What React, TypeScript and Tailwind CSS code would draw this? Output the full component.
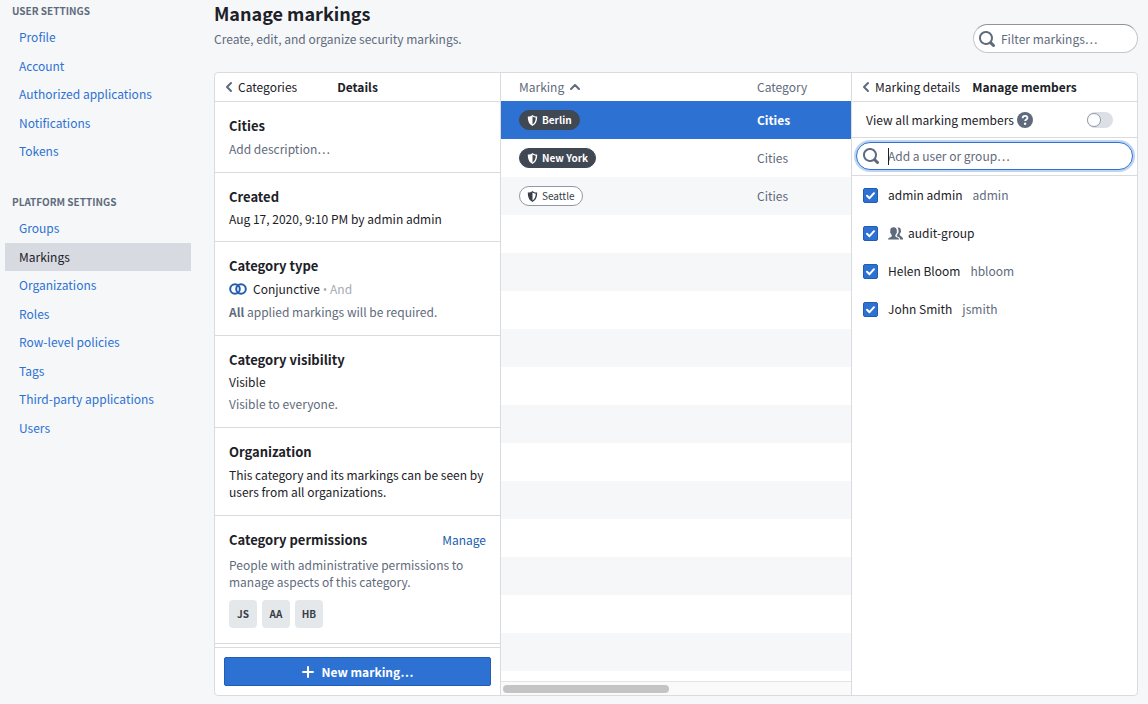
import { useState } from 'react';
import type { ReactNode } from 'react';

const userSettings = ['Profile', 'Account', 'Authorized applications', 'Notifications', 'Tokens'];

const platformSettings = [
  'Groups',
  'Markings',
  'Organizations',
  'Roles',
  'Row-level policies',
  'Tags',
  'Third-party applications',
  'Users',
];

const markings = [
  { name: 'Berlin', category: 'Cities', dark: true },
  { name: 'New York', category: 'Cities', dark: true },
  { name: 'Seattle', category: 'Cities', dark: false },
];

const members = [
  { name: 'admin admin', username: 'admin' },
  { name: 'audit-group', group: true },
  { name: 'Helen Bloom', username: 'hbloom' },
  { name: 'John Smith', username: 'jsmith' },
];

const FILLER_ROWS = 13;

function SearchIcon({ className }: { className?: string }) {
  return (
    <svg viewBox="0 0 16 16" className={`size-4 fill-[#5f6b7c] ${className ?? ''}`} aria-hidden="true">
      <path d="M15.55 13.43l-2.67-2.68a6.94 6.94 0 001.11-3.76c0-3.87-3.13-7-7-7s-7 3.13-7 7 3.13 7 7 7c1.39 0 2.68-.42 3.76-1.11l2.68 2.67a1.498 1.498 0 102.12-2.12zm-8.56-1.44c-2.76 0-5-2.24-5-5s2.24-5 5-5 5 2.24 5 5-2.24 5-5 5z" />
    </svg>
  );
}

function ChevronIcon({ className }: { className?: string }) {
  return (
    <svg
      viewBox="0 0 16 16"
      className={`size-4 fill-none stroke-[#5f6b7c] ${className ?? ''}`}
      strokeWidth="2"
      strokeLinecap="round"
      strokeLinejoin="round"
      aria-hidden="true"
    >
      <path d="M10 4L6 8l4 4" />
    </svg>
  );
}

function ShieldIcon() {
  return (
    <svg viewBox="0 0 16 16" className="size-[11px] fill-current" aria-hidden="true">
      <path
        fillRule="evenodd"
        d="M8 0c1.800 1.400 3.900 2.300 6.800 2.300 0 6-1.300 10.800-6.800 13.700C2.500 13.100 1.200 8.300 1.200 2.300 4.100 2.300 6.200 1.400 8 0zm0 2.300v11.400c3.300-2.200 4.500-5.300 4.800-9.700C10.900 3.800 9.400 3.200 8 2.300z"
      />
    </svg>
  );
}

function PeopleIcon() {
  return (
    <svg viewBox="0 0 16 16" className="size-[15px] fill-[#5f6b7c]" aria-hidden="true">
      <path d="M5.900 1.300c2.100 0 3.500 1.300 3.500 3.400 0 .5 0 .8-.1 1.100.4.200.3 1.500-.3 1.800-.3.900-.7 1.500-1.200 1.900v1.100c0 1.400 4.200 1.500 4.200 3.900H0c0-2.400 4-2.500 4-3.900V9.500c-.5-.4-.9-1-1.200-1.900-.6-.3-.7-1.600-.3-1.800-.1-.3-.1-.6-.1-1.100 0-2.100 1.400-3.400 3.500-3.400z" />
      <path d="M10 1.700c.3-.1.700-.2 1.100-.2 1.700 0 2.600 1.100 2.600 2.700v1c.4.200.2 1.300-.2 1.500-.3.800-.6 1.300-1 1.700v1.100c0 1.100 3.500 1.600 3.500 4.200v.8h-3c0-2.600-2.100-3-3.400-3.700-.4-.2-.4-.6-.1-1 .4-.5.800-1 1-1.700.8-.7 1-1.800.7-2.700.1-1.500-.3-2.800-1.200-3.700z" />
    </svg>
  );
}

function Panel({ title, action, children }: { title: string; action?: ReactNode; children: ReactNode }) {
  return (
    <section className="border-b border-[#d9dbde] px-3.5 pt-3 pb-3">
      <div className="flex items-center justify-between">
        <h2 className="text-[13px] leading-[23px] font-bold">{title}</h2>
        {action}
      </div>
      {children}
    </section>
  );
}

function SidebarGroup({ title, items, active }: { title: string; items: string[]; active?: string }) {
  return (
    <div>
      <h2 className="pl-[7px] text-[10px] leading-4 font-bold text-[#5f6b7c]">{title}</h2>
      <ul className="mt-1">
        {items.map((item) => (
          <li key={item} className="even:mt-px">
            <a
              href="#"
              className={`block pl-3.5 leading-7 ${
                item === active ? 'bg-[#d7dae0] text-[#1c2127]' : 'text-[#2d72d2]'
              }`}
            >
              {item}
            </a>
          </li>
        ))}
      </ul>
    </div>
  );
}

function Details() {
  return (
    <div className="flex w-[286px] shrink-0 flex-col border-r border-[#d9dbde]">
      <div className="flex h-[29px] shrink-0 items-center border-b border-[#d9dbde] pl-1.5">
        <button className="flex items-center">
          <ChevronIcon />
          <span className="pl-px">Categories</span>
        </button>
        <button className="ml-10 font-bold">Details</button>
      </div>

      <div className="min-h-0 flex-1 overflow-hidden">
        <Panel title="Cities">
          <p className="leading-[23px] text-[#5f6b7c]">Add description…</p>
        </Panel>
        <Panel title="Created">
          <p className="leading-[21px]">Aug 17, 2020, 9:10 PM by admin admin</p>
        </Panel>
        <Panel title="Category type">
          <p className="flex h-6 items-center">
            <svg viewBox="0 0 18 12" className="mr-1.5 h-3 w-[18px] fill-none stroke-[#215db0]" strokeWidth="2" aria-hidden="true">
              <circle cx="6" cy="6" r="4.800" />
              <circle cx="12" cy="6" r="4.800" />
            </svg>
            Conjunctive
            <span className="pl-[3px] text-[#a5abb5]">
              <span className="font-['Open_Sans',sans-serif] leading-none">•</span> And
            </span>
          </p>
          <p className="leading-[22px] text-[#5f6b7c]">
            <b>All</b> applied markings will be required.
          </p>
        </Panel>
        <Panel title="Category visibility">
          <p className="leading-[22px]">Visible</p>
          <p className="leading-[22px] text-[#5f6b7c]">Visible to everyone.</p>
        </Panel>
        <Panel title="Organization">
          <p className="my-[3px] leading-[17px]">
            This category and its markings can be seen by users from all organizations.
          </p>
        </Panel>
        <Panel title="Category permissions" action={<button className="text-[#215db0]">Manage</button>}>
          <p className="mt-[5px] leading-[17px] text-[#5f6b7c]">
            People with administrative permissions to manage aspects of this category.
          </p>
          <div className="mt-2.5 mb-[3px] flex gap-[5px]">
            {['JS', 'AA', 'HB'].map((initials) => (
              <span
                key={initials}
                className="flex size-7 items-center justify-center rounded-sm bg-[#e5e8eb] text-[10px] font-bold text-[#383e47]"
              >
                {initials}
              </span>
            ))}
          </div>
        </Panel>
      </div>

      <div className="border-t border-[#d9dbde] p-[9px]">
        <button className="flex h-[29px] w-full items-center justify-center gap-2 rounded-xs border border-[#215db0] bg-[#2d72d2] font-bold text-white">
          <svg viewBox="0 0 12 12" className="size-3 stroke-white" strokeWidth="2" strokeLinecap="round" aria-hidden="true">
            <path d="M6 1v10M1 6h10" />
          </svg>
          New marking…
        </button>
      </div>
    </div>
  );
}

function MarkingTable() {
  const [selected, setSelected] = useState('Berlin');

  return (
    <div className="flex min-w-0 flex-1 flex-col">
      <div className="min-h-0 flex-1 overflow-hidden">
        <table className="w-full table-fixed border-collapse text-left">
          <thead>
            <tr className="h-7 text-[#5f6b7c]">
              <th className="w-[238px] p-0 pl-[18px] font-normal">
                <span className="flex items-center gap-[3px]">
                  Marking
                  <ChevronIcon className="rotate-90" />
                </span>
              </th>
              <th className="p-0 pl-[18px] font-normal">Category</th>
            </tr>
          </thead>
          <tbody>
            {markings.map((marking) => (
              <tr
                key={marking.name}
                onClick={() => setSelected(marking.name)}
                className={`h-[38px] ${
                  marking.name === selected
                    ? 'bg-[#2d72d2] font-bold text-white'
                    : 'text-[#5f6b7c] odd:bg-[#f6f7f9]'
                }`}
              >
                <td className="p-0 pl-[18px]">
                  <span
                    className={`flex h-5 w-fit items-center gap-1 rounded-full border px-[7px] text-[10px] leading-none ${
                      marking.dark
                        ? 'border-[#404854] bg-[#404854] font-bold text-white'
                        : 'border-[#8f99a8] bg-white font-normal text-[#383e47]'
                    }`}
                  >
                    <ShieldIcon />
                    {marking.name}
                  </span>
                </td>
                <td className="p-0 pl-[18px]">{marking.category}</td>
              </tr>
            ))}
            {Array.from({ length: FILLER_ROWS }, (_, i) => (
              <tr key={i} className="h-[38px] even:bg-white odd:bg-[#f6f7f9]" aria-hidden="true">
                <td colSpan={2} className="p-0" />
              </tr>
            ))}
          </tbody>
        </table>
      </div>
      <div className="border-t border-[#e3e4e6] bg-[#fafafa] px-0.5 pt-[3px] pb-0.5">
        <div className="h-2 w-12/25 rounded-full bg-[#c4c4c4]" />
      </div>
    </div>
  );
}

function Members() {
  const [query, setQuery] = useState('');

  return (
    <div className="flex w-[286px] shrink-0 flex-col border-l border-[#d9dbde]">
      <div className="flex h-[29px] shrink-0 items-center border-b border-[#d9dbde] pl-1.5">
        <button className="flex items-center">
          <ChevronIcon />
          <span className="pl-px">Marking details</span>
        </button>
        <button className="ml-3 font-bold">Manage members</button>
      </div>

      <div className="flex h-9 items-center border-b border-[#d9dbde] pr-6 pl-3.5">
        <label htmlFor="view-all">View all marking members</label>
        <svg viewBox="0 0 16 16" className="ml-[3px] size-4" aria-hidden="true">
          <circle cx="8" cy="8" r="8" fill="#5f6b7c" />
          <path d="M5.700 6.200c0-1.400 1-2.300 2.400-2.300s2.300.8 2.300 2c0 1.600-2.200 1.600-2.200 3.100" fill="none" stroke="#fff" strokeWidth="1.800" />
          <circle cx="8.100" cy="11.700" r="1.200" fill="#fff" />
        </svg>
        <input
          id="view-all"
          type="checkbox"
          role="switch"
          className="ml-auto h-4 w-[26px] appearance-none rounded-full bg-[#dcdfe5] before:block before:size-[14px] before:translate-y-px before:rounded-full before:border before:border-[#8f99a8] before:bg-white checked:bg-[#2d72d2] checked:before:translate-x-3"
        />
      </div>

      <div className="border-b border-[#d9dbde] px-1 pt-1 pb-[5px]">
        <label className="flex h-7 items-center rounded-full border border-[#2d72d2] bg-white pl-1.5 ring-2 ring-[#2d72d2]/30">
          <SearchIcon />
          <span className="relative ml-[9px] flex flex-1 items-center">
            {query === '' && <span className="absolute left-0 h-[17px] w-px bg-[#1c2127]" />}
            <input
              type="text"
              value={query}
              onChange={(e) => setQuery(e.target.value)}
              aria-label="Add a user or group"
              placeholder="Add a user or group…"
              className="w-full outline-none placeholder:text-[#5f6b7c]"
            />
          </span>
        </label>
      </div>

      <ul>
        {members.map((member) => (
          <li key={member.name}>
            <label className="flex h-[38px] items-center pl-[11px]">
              <span className="relative flex">
                <input
                  type="checkbox"
                  defaultChecked
                  className="peer size-[15px] appearance-none rounded-xs border border-[#8f99a8] bg-white checked:border-[#215db0] checked:bg-[#2d72d2]"
                />
                <svg
                  viewBox="0 0 15 15"
                  className="pointer-events-none absolute inset-0 hidden fill-none stroke-white peer-checked:block"
                  strokeWidth="2"
                  strokeLinecap="round"
                  strokeLinejoin="round"
                  aria-hidden="true"
                >
                  <path d="M4 7.800l2.500 2.400L11 5.200" />
                </svg>
              </span>
              <span className="ml-2.5 flex items-center gap-[5px]">
                {member.group && <PeopleIcon />}
                {member.name}
              </span>
              <span className="ml-2.5 text-[#5f6b7c]">{member.username}</span>
            </label>
          </li>
        ))}
      </ul>
    </div>
  );
}

export default function App() {
  return (
    <div className="flex h-screen min-h-[640px] bg-[#f6f7f9] font-['Noto_Sans_CJK_SC','Open_Sans',sans-serif] text-[12px] leading-5 text-[#1c2127]">
      <nav className="flex w-[191px] shrink-0 flex-col gap-[29px] pt-[3px] pl-[5px]">
        <SidebarGroup title="USER SETTINGS" items={userSettings} />
        <SidebarGroup title="PLATFORM SETTINGS" items={platformSettings} active="Markings" />
      </nav>

      <main className="ml-[23px] flex min-w-0 flex-1 flex-col pr-2.5 pb-2">
        <header className="flex h-[72px] shrink-0 items-start justify-between">
          <div>
            <h1 className="text-[18px] leading-[27px] font-bold">Manage markings</h1>
            <p className="leading-6 text-[#5f6b7c]">Create, edit, and organize security markings.</p>
          </div>
          <label className="mt-6 flex h-[29px] w-[165px] items-center rounded-full border border-[#c3c7cd] border-t-[#8f949c] bg-white pl-[5px]">
            <SearchIcon />
            <input
              type="text"
              aria-label="Filter markings"
              placeholder="Filter markings…"
              className="ml-1.5 min-w-0 flex-1 outline-none placeholder:text-[#5f6b7c]"
            />
          </label>
        </header>

        <div className="flex min-h-0 flex-1 overflow-hidden rounded-sm border border-[#d9dbde] bg-white">
          <Details />
          <MarkingTable />
          <Members />
        </div>
      </main>
    </div>
  );
}
